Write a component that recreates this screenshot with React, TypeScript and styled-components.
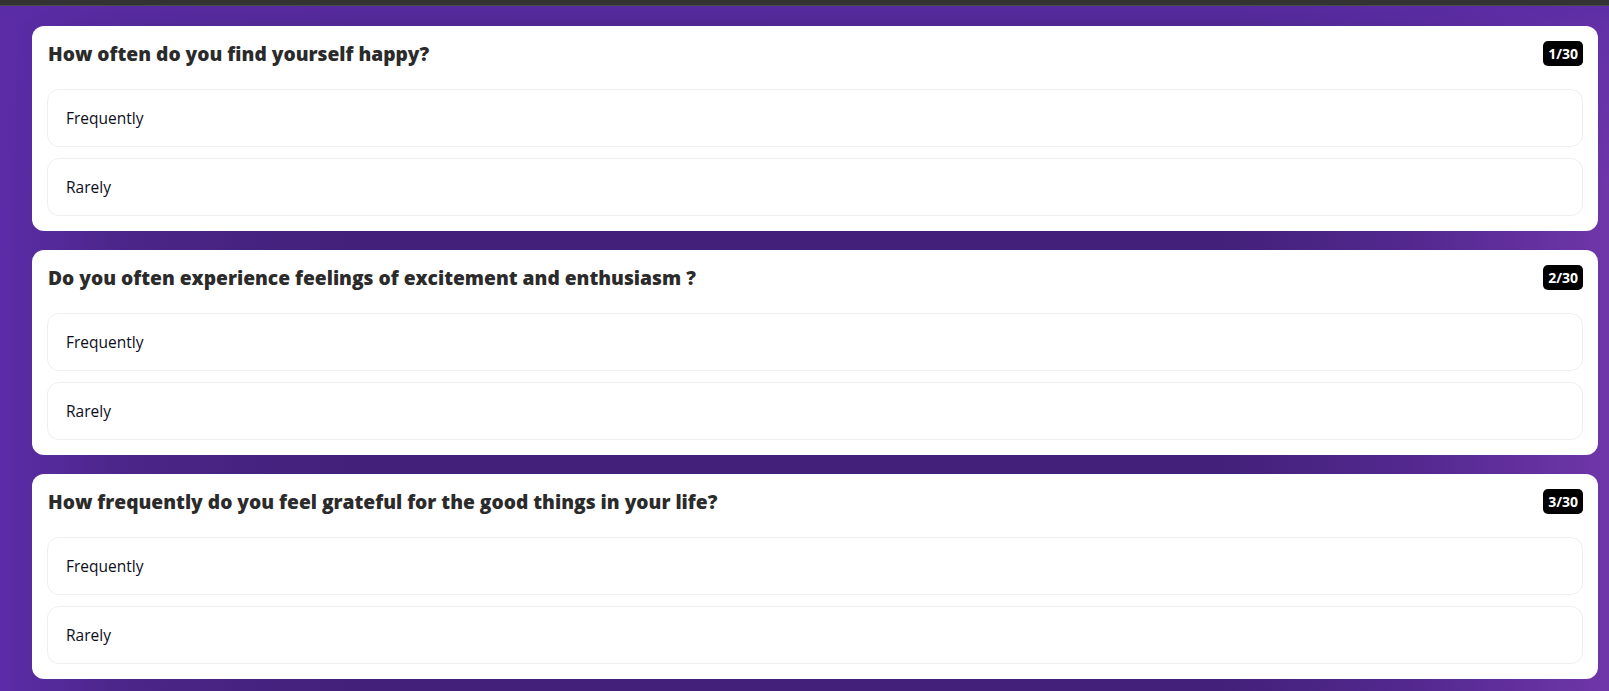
import React from "react";
import styled, { createGlobalStyle } from "styled-components";

const GlobalStyle = createGlobalStyle`
  html, body {
    margin: 0;
    padding: 0;
    height: 100%;
    overflow: hidden;
  }
  body {
    font-family: "Open Sans", "Noto Sans", Arial, sans-serif;
    background:
      linear-gradient(180deg, rgba(90, 44, 166, 0.95) 0px, rgba(90, 44, 166, 0.55) 26px, rgba(90, 44, 166, 0) 210px),
      linear-gradient(90deg, #5b2ca7 0%, #4b2588 8%, #43217a 22%, #43217a 76%, #53288f 88%, #6f36a9 100%);
  }
`;

const TopBar = styled.div`
  height: 5px;
  background: #333333;
  border-bottom: 1px solid #4a4a4a;
`;

const Page = styled.main`
  display: flex;
  flex-direction: column;
  gap: 19px;
  padding: 20px 11px 0 32px;
`;

const Card = styled.section`
  background: #ffffff;
  border-radius: 12px;
  padding: 15px;
  display: flex;
  flex-direction: column;
`;

const Header = styled.header`
  display: flex;
  align-items: center;
  justify-content: space-between;
  height: 25px;
  margin-bottom: 23px;
`;

const Title = styled.h2`
  margin: 0 0 0 1px;
  font-family: "Open Sans", "Noto Sans", Arial, sans-serif;
  font-size: 19.2px;
  font-weight: 800;
  color: #2b2b2b;
`;

const Badge = styled.span`
  display: inline-flex;
  align-items: center;
  justify-content: center;
  height: 25px;
  min-width: 39px;
  box-sizing: border-box;
  padding: 0 5px;
  background: #000000;
  color: #ffffff;
  border-radius: 5px;
  font-size: 14px;
  font-weight: 700;
`;

const Options = styled.div`
  display: flex;
  flex-direction: column;
  gap: 11px;
`;

const Option = styled.div`
  box-sizing: border-box;
  height: 58px;
  display: flex;
  align-items: center;
  padding: 0 18px;
  border: 1px solid #efefef;
  border-radius: 12px;
  background: #ffffff;
  font-size: 15.5px;
  font-weight: 500;
  color: #0c0c1a;
  cursor: pointer;
`;

const questions = [
  "How often do you find yourself happy?",
  "Do you often experience feelings of excitement and enthusiasm ?",
  "How frequently do you feel grateful for the good things in your life?",
];

const answers = ["Frequently", "Rarely"];

export default function App() {
  return (
    <>
      <GlobalStyle />
      <TopBar />
      <Page>
        {questions.map((q, i) => (
          <Card key={q}>
            <Header>
              <Title>{q}</Title>
              <Badge>{i + 1}/30</Badge>
            </Header>
            <Options>
              {answers.map((a) => (
                <Option key={a}>{a}</Option>
              ))}
            </Options>
          </Card>
        ))}
      </Page>
    </>
  );
}
